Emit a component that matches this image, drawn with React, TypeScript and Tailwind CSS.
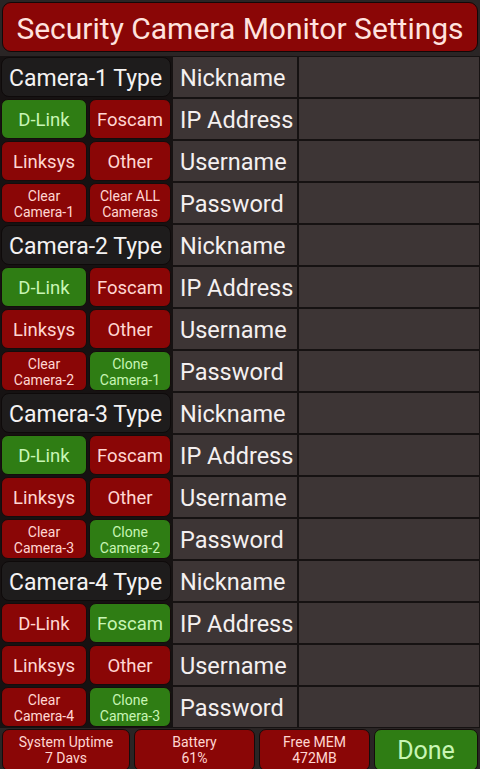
import React from "react";

type Tone = "red" | "green";

const btnBase =
  "flex items-center justify-center rounded-[7px] border border-[#140c0c] text-center";
const toneCls: Record<Tone, string> = {
  red: "bg-[#8a0606] text-[#ffd6d2]",
  green: "bg-[#2f7d14] text-[#c8f5b4]",
};

function Btn({ tone, children, small }: { tone: Tone; children: React.ReactNode; small?: boolean }) {
  return (
    <div
      className={`${btnBase} ${toneCls[tone]} ${small ? "pt-[1px] text-[14px] leading-[16px]" : "pt-[3px] text-[18.5px] leading-none"}`}
    >
      {children}
    </div>
  );
}

function Label({ text }: { text: string }) {
  return (
    <div className="flex items-center bg-[#3d3535] pl-[7px] pt-[3px] text-[23.5px] leading-none text-[#f4f0f0]">
      {text}
    </div>
  );
}

function Field() {
  return <div className="bg-[#3d3535]" />;
}

type Cam = {
  n: number;
  dlink: Tone;
  foscam: Tone;
  second: [string, string];
  secondTone: Tone;
};

const cams: Cam[] = [
  { n: 1, dlink: "green", foscam: "red", second: ["Clear ALL", "Cameras"], secondTone: "red" },
  { n: 2, dlink: "green", foscam: "red", second: ["Clone", "Camera-1"], secondTone: "green" },
  { n: 3, dlink: "green", foscam: "red", second: ["Clone", "Camera-2"], secondTone: "green" },
  { n: 4, dlink: "red", foscam: "green", second: ["Clone", "Camera-3"], secondTone: "green" },
];

function Block({ c }: { c: Cam }) {
  return (
    <>
      <div className="col-span-2 flex items-center rounded-[8px] border border-[#0e0a0a] bg-[#1e1c1c] pl-[7px] pt-[3px] text-[23px] leading-none text-[#f4f2f2]">
        Camera-{c.n} Type
      </div>
      <Label text="Nickname" />
      <Field />

      <Btn tone={c.dlink}>D-Link</Btn>
      <Btn tone={c.foscam}>Foscam</Btn>
      <Label text="IP Address" />
      <Field />

      <Btn tone="red">Linksys</Btn>
      <Btn tone="red">Other</Btn>
      <Label text="Username" />
      <Field />

      <Btn tone="red" small>
        <span>
          Clear
          <br />
          Camera-{c.n}
        </span>
      </Btn>
      <Btn tone={c.secondTone} small>
        <span>
          {c.second[0]}
          <br />
          {c.second[1]}
        </span>
      </Btn>
      <Label text="Password" />
      <Field />
    </>
  );
}

export default function App() {
  return (
    <div
      className="flex h-[769px] w-[480px] flex-col bg-[#2a2525]"
      style={{ fontFamily: "Roboto, 'Liberation Sans', sans-serif" }}
    >
      <div className="mx-[2px] mt-[2px] flex h-[50px] shrink-0 items-center justify-center rounded-[9px] border border-[#120808] bg-[#8a0606] pt-[4px] text-[30px] leading-none text-[#ffe2de]">
        Security Camera Monitor Settings
      </div>
      <div className="mt-[4px] grid shrink-0 grid-cols-[86px_82px_124px_1fr] auto-rows-[40px] gap-x-[2px] gap-y-[2px] bg-[#161212] px-[1px] py-[1px]">
        {cams.map((c) => (
          <Block key={c.n} c={c} />
        ))}
      </div>
      <div className="flex flex-1 gap-[4px] px-[2px] pb-[2px] pt-[1px]">
        <div className={`${btnBase} ${toneCls.red} w-[128px] pt-[1px] text-[14px] leading-[16px]`}>
          <span>
            System Uptime
            <br />7 Davs
          </span>
        </div>
        <div className={`${btnBase} ${toneCls.red} w-[121px] pt-[1px] text-[14px] leading-[16px]`}>
          <span>
            Battery
            <br />
            61%
          </span>
        </div>
        <div className={`${btnBase} ${toneCls.red} w-[111px] pt-[1px] text-[14px] leading-[16px]`}>
          <span>
            Free MEM
            <br />
            472MB
          </span>
        </div>
        <div className={`${btnBase} ${toneCls.green} flex-1 pt-[2px] text-[25px]`}>Done</div>
      </div>
    </div>
  );
}
